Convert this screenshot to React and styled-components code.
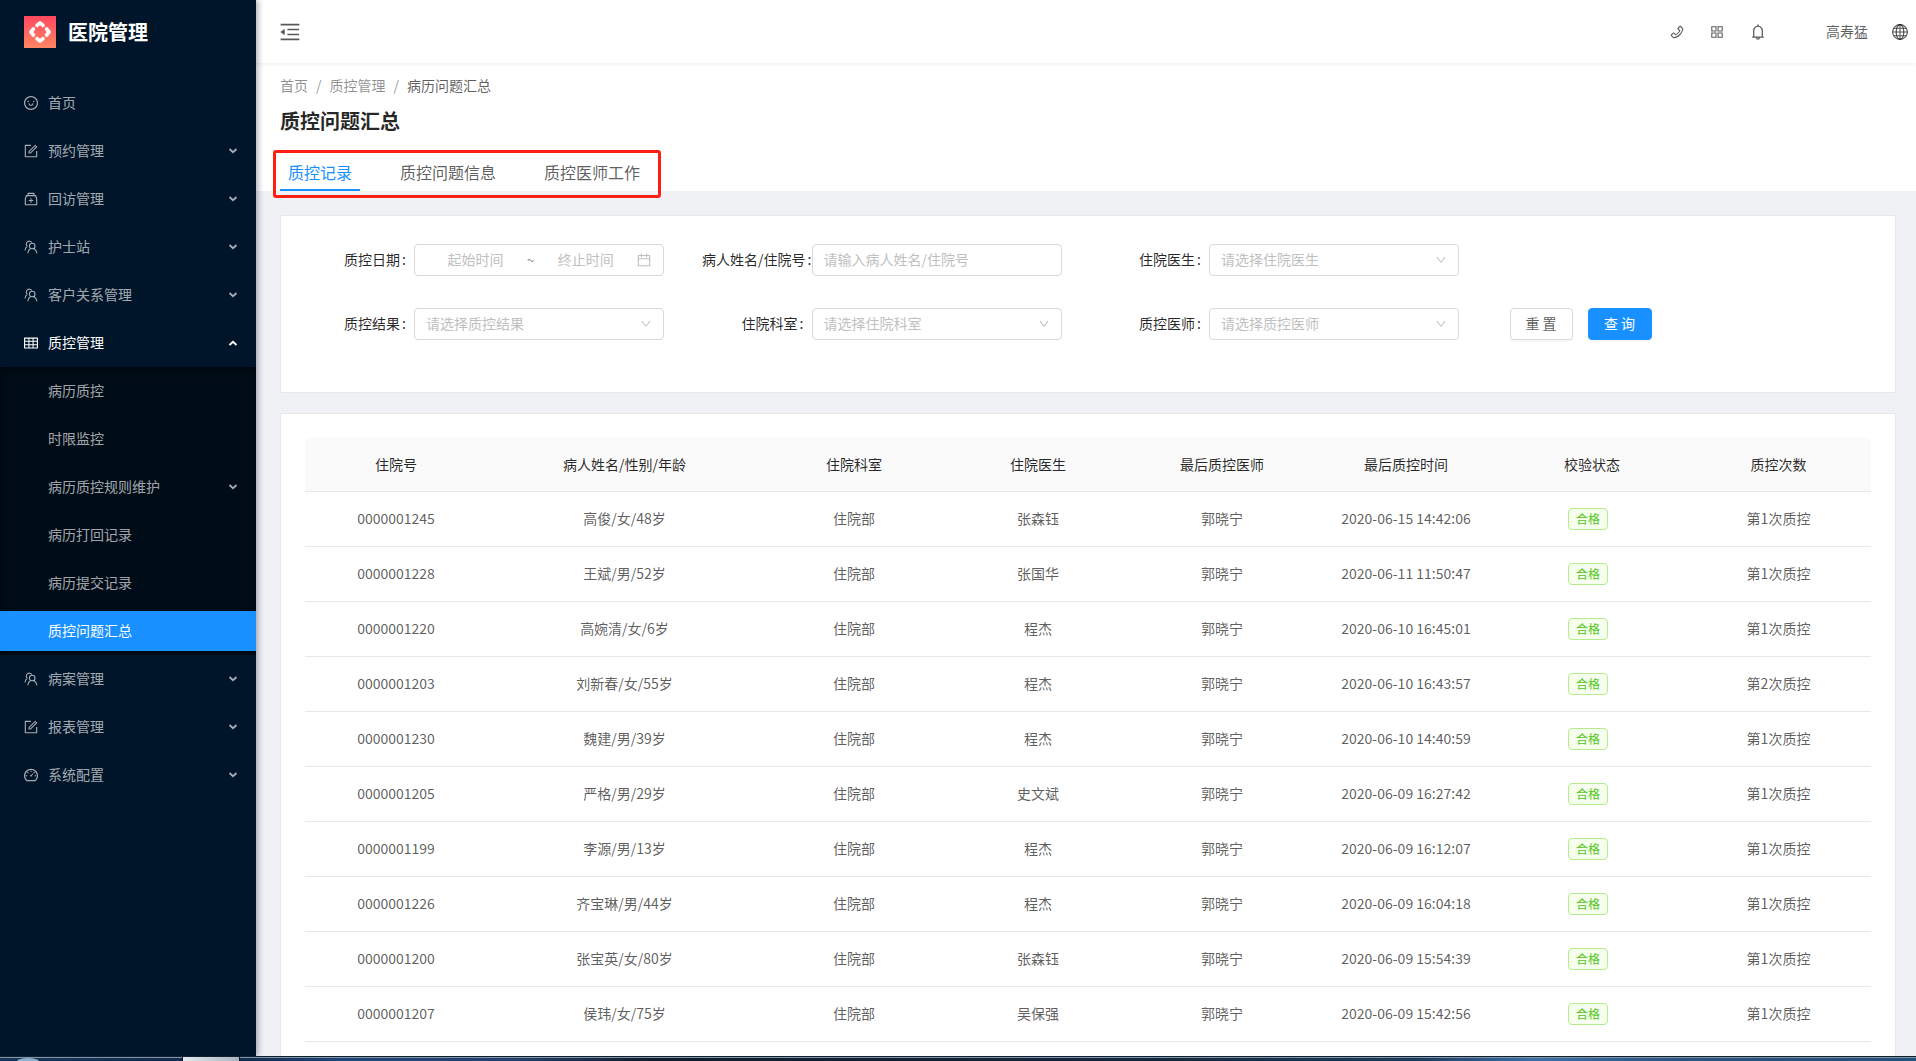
import styled, { createGlobalStyle, css } from 'styled-components';
import {
  AiOutlineSmile,
  AiOutlineForm,
  AiOutlineMedicineBox,
  AiOutlineTable,
  AiOutlineDashboard,
  AiOutlineMenuFold,
  AiOutlinePhone,
  AiOutlineAppstore,
  AiOutlineBell,
  AiOutlineCalendar,
  AiOutlineDown,
} from 'react-icons/ai';

const GlobalStyle = createGlobalStyle`
  * {
    box-sizing: border-box;
  }

  body {
    margin: 0;
    background: #f0f1f5;
    color: rgba(0, 0, 0, 0.65);
    font-family: 'Noto Sans CJK SC', 'Noto Sans', sans-serif;
    font-size: 14px;
    line-height: 22px;
  }

  button,
  input,
  select {
    font: inherit;
    color: inherit;
  }

  svg {
    display: block;
    flex: none;
  }
`;

const Screen = styled.div`
  display: flex;
  flex-direction: column;
  height: 100vh;
  overflow: hidden;
`;

const Layout = styled.div`
  display: flex;
  flex: 1;
  min-height: 0;
`;

/* ---------- sidebar ---------- */

const Sidebar = styled.aside`
  position: relative;
  z-index: 10;
  flex: none;
  width: 256px;
  background: #001529;
  box-shadow: 2px 0 6px rgba(0, 21, 41, 0.35);
`;

const Brand = styled.a`
  display: flex;
  align-items: center;
  gap: 12px;
  height: 63px;
  padding-left: 24px;
  color: #fff;
  font-size: 20px;
  font-weight: 700;
  text-decoration: none;
`;

const Menu = styled.ul`
  margin: 0;
  padding: ${(props) => (props.$sub ? 0 : '16px 0 0')};
  list-style: none;

  ${(props) =>
    props.$sub &&
    css`
      background: #000c17;
      box-shadow: inset 0 2px 8px rgba(0, 0, 0, 0.45);
    `}
`;

const MenuItem = styled.li`
  display: flow-root;
`;

const MenuLink = styled.a`
  display: flex;
  align-items: center;
  gap: 9px;
  height: 40px;
  margin: 4px 0;
  padding: 0 18px 0 ${(props) => (props.$sub ? 48 : 23)}px;
  color: ${(props) => (props.$open || props.$selected ? '#fff' : 'rgba(255, 255, 255, 0.65)')};
  background: ${(props) => (props.$selected ? '#1890ff' : 'transparent')};
  text-decoration: none;
`;

const NavText = styled.span`
  padding-bottom: 2px;
`;

const Caret = styled.svg`
  margin-left: auto;
  transform: ${(props) => (props.$up ? 'rotate(180deg)' : 'none')};
`;

/* ---------- top bar ---------- */

const Main = styled.main`
  flex: 1;
  min-width: 0;
  overflow: hidden;
`;

const TopBar = styled.header`
  position: relative;
  display: flex;
  align-items: center;
  height: 63px;
  padding: 0 8px 0 22px;
  background: #fff;
  box-shadow: 0 1px 4px rgba(0, 21, 41, 0.08);
`;

const IconButton = styled.button`
  display: flex;
  align-items: center;
  justify-content: center;
  padding: 0;
  border: 0;
  background: none;
`;

const Tools = styled.div`
  display: flex;
  align-items: center;
  gap: 24px;
  margin-left: auto;
`;

const ToolIcons = styled.div`
  display: flex;
  align-items: center;
  gap: 24px;
  margin-right: 35px;
`;

/* ---------- page header ---------- */

const PageHeader = styled.section`
  padding: 11px 24px 0;
  background: #fff;
`;

const Breadcrumb = styled.nav`
  display: flex;
  gap: 8px;
  color: rgba(0, 0, 0, 0.45);

  a {
    color: inherit;
    text-decoration: none;
  }

  a:last-child {
    color: rgba(0, 0, 0, 0.65);
  }
`;

const PageTitle = styled.h1`
  margin: 11px 0 14px;
  color: rgba(0, 0, 0, 0.85);
  font-size: 20px;
  font-weight: 700;
  line-height: 28px;
`;

const Tabs = styled.div`
  position: relative;
  display: inline-flex;
  gap: 32px;
  vertical-align: top;
`;

const Tab = styled.button`
  padding: 11px 8px 5px;
  border: 0;
  border-bottom: 2px solid ${(props) => (props.$active ? '#1890ff' : 'transparent')};
  background: none;
  color: ${(props) => (props.$active ? '#1890ff' : 'inherit')};
  font-size: 16px;
  line-height: 24px;
`;

const TabsMark = styled.div`
  position: absolute;
  inset: 1px -13px -7px -7px;
  border: 3px solid #ff1e12;
  border-radius: 3px;
  pointer-events: none;
`;

/* ---------- content ---------- */

const Content = styled.div`
  display: grid;
  gap: 20px;
  padding: 24px 20px 0 24px;
`;

const Card = styled.section`
  border: 1px solid #e8e8e8;
  border-radius: 2px;
  background: #fff;
`;

const FilterCard = styled(Card)`
  padding: 28px 24px 52px 0;
`;

const FilterForm = styled.form`
  display: grid;
  grid-template-columns: repeat(4, 1fr);
  row-gap: 32px;
`;

const Field = styled.div`
  display: flex;
  align-items: center;
`;

const FieldLabel = styled.label`
  flex: none;
  width: 133px;
  padding: 0 ${(props) => (props.$tight ? 0 : 8)}px 2px 0;
  color: rgba(0, 0, 0, 0.85);
  text-align: right;
  white-space: nowrap;

  &::after {
    content: ':';
    margin-left: 2px;
  }
`;

const ControlBox = styled.div`
  display: flex;
  align-items: center;
  position: relative;
  width: 250px;
  height: 32px;
  border: 1px solid #d9d9d9;
  border-radius: 4px;
  background: #fff;
  color: #bfbfbf;
`;

const controlText = css`
  width: 100%;
  height: 100%;
  padding: 0 11px 2px;
  border: 0;
  outline: 0;
  background: transparent;
  color: #bfbfbf;

  &::placeholder {
    color: #bfbfbf;
    opacity: 1;
  }
`;

const TextInput = styled.input`
  ${controlText}
`;

const Select = styled.select`
  ${controlText}
  appearance: none;
`;

const SelectArrow = styled(AiOutlineDown)`
  position: absolute;
  right: 11px;
  pointer-events: none;
`;

const DateBox = styled(ControlBox)`
  justify-content: space-between;
  padding: 0 11px;
`;

const DateInput = styled.input`
  ${controlText}
  width: 99px;
  padding: 0 0 2px;
  text-align: center;
`;

const Tilde = styled.span`
  width: 10px;
  color: rgba(0, 0, 0, 0.45);
  text-align: center;
`;

const Actions = styled.div`
  display: flex;
  grid-column: 4;
  gap: 15px;
  padding-left: 36px;
`;

const Button = styled.button`
  width: ${(props) => (props.$primary ? 64 : 63)}px;
  height: 32px;
  padding: 0 0 2px;
  border: 1px solid ${(props) => (props.$primary ? '#1890ff' : '#d9d9d9')};
  border-radius: 4px;
  background: ${(props) => (props.$primary ? '#1890ff' : '#fff')};
  color: ${(props) => (props.$primary ? '#fff' : 'rgba(0, 0, 0, 0.65)')};
  box-shadow: 0 2px 0 rgba(0, 0, 0, 0.03);
`;

const TableCard = styled(Card)`
  padding: 24px;
`;

const Table = styled.table`
  width: 100%;
  border-collapse: separate;
  border-spacing: 0;
  table-layout: fixed;
  text-align: center;

  th {
    height: 54px;
    padding: 0 16px 2px;
    border-bottom: 1px solid #e8e8e8;
    background: #fafafa;
    color: rgba(0, 0, 0, 0.85);
    font-weight: 400;
  }

  td {
    height: 55px;
    padding: 0 16px 2px;
    border-bottom: 1px solid #e8e8e8;
  }

  th:first-child {
    border-top-left-radius: 4px;
  }

  th:last-child {
    border-top-right-radius: 4px;
  }
`;

const Col = styled.col`
  width: ${(props) => props.$width}px;
`;

const Tag = styled.span`
  display: inline-block;
  margin-right: 8px;
  padding: 0 7px;
  border: 1px solid #b7eb8f;
  border-radius: 4px;
  background: #f6ffed;
  color: #52c41a;
  font-size: 12px;
  line-height: 20px;
  vertical-align: middle;
`;

/* ---------- desktop task bar ---------- */

const TaskBar = styled.footer`
  position: relative;
  z-index: 20;
  display: flex;
  flex: none;
  height: 5px;
  border-top: 1px solid #10202f;
  background: linear-gradient(90deg, #17365d 0%, #12284a 12%, #1d4778 18%, #24406b 27%, #101c2c 34%, #14283c 60%, #1a3c5c 74%, #3d6fa5 80%, #2b537f 88%, #24507c 100%);
  box-shadow: inset 0 1px 0 #7f93a8;
`;

const StartOrb = styled.div`
  align-self: flex-end;
  width: 22px;
  height: 3px;
  margin-left: 17px;
  border-radius: 11px 11px 0 0 / 3px 3px 0 0;
  background: #8fb3cc;
`;

const TaskWindow = styled.div`
  width: 58px;
  height: 4px;
  margin-left: 143px;
  border: solid #0a1420;
  border-width: 0 1px;
  background: linear-gradient(90deg, #e4e8ec, #a9b5c0);
`;

function LogoIcon() {
  return (
    <svg width="32" height="32" viewBox="0 0 32 32">
      <defs>
        <linearGradient id="logo" x1="0" y1="0" x2="0" y2="1">
          <stop offset="0" stopColor="#ff4860" />
          <stop offset="1" stopColor="#ff8562" />
        </linearGradient>
      </defs>
      <rect width="32" height="32" fill="url(#logo)" />
      <g fill="none" stroke="#fff" strokeWidth="3.6" strokeLinecap="round" strokeLinejoin="round">
        {[0, 90, 180, 270].map((angle) => (
          <path key={angle} transform={`rotate(${angle} 16 16)`} d="M13 9.400L16 6.900l3 2.500" />
        ))}
      </g>
    </svg>
  );
}

function PeopleIcon() {
  return (
    <svg width="16" height="16" viewBox="-1 -1 16 16" fill="none" stroke="currentColor" strokeWidth="1.1">
      <path d="M3.300 6.400A3 3 0 1 1 7.800 2.500M3.300 6.400C2 7.300 1.200 8.700 1 10.400" />
      <circle cx="8.2" cy="6" r="2.8" />
      <path d="M6.600 8.400C5 9.300 4 11 3.800 13.200M9.800 8.400c1.700.9 2.900 2.600 3.200 4.800" />
    </svg>
  );
}

function GlobeIcon() {
  return (
    <svg width="16" height="16" viewBox="0 0 16 16" fill="none" stroke="currentColor" strokeWidth="1.1">
      <circle cx="8" cy="8" r="7.4" />
      <ellipse cx="8" cy="8" rx="3.8" ry="7.4" />
      <path d="M8 .6v14.800M.6 8h14.800M1.700 4.300h12.600M1.700 11.700h12.600" />
    </svg>
  );
}

function MenuCaret({ up }) {
  return (
    <Caret $up={up} width="10" height="8" viewBox="0 0 10 8" fill="none" stroke="currentColor" strokeWidth="1.8">
      <path d="M1.500 2L5 5.200 8.500 2" />
    </Caret>
  );
}

const menu = [
  { title: '首页', icon: AiOutlineSmile },
  { title: '预约管理', icon: AiOutlineForm, group: true },
  { title: '回访管理', icon: AiOutlineMedicineBox, group: true },
  { title: '护士站', icon: PeopleIcon, group: true },
  { title: '客户关系管理', icon: PeopleIcon, group: true },
  {
    title: '质控管理',
    icon: AiOutlineTable,
    group: true,
    children: [
      { title: '病历质控' },
      { title: '时限监控' },
      { title: '病历质控规则维护', group: true },
      { title: '病历打回记录' },
      { title: '病历提交记录' },
      { title: '质控问题汇总', selected: true },
    ],
  },
  { title: '病案管理', icon: PeopleIcon, group: true },
  { title: '报表管理', icon: AiOutlineForm, group: true },
  { title: '系统配置', icon: AiOutlineDashboard, group: true },
];

const columns = [
  { title: '住院号', width: 182 },
  { title: '病人姓名/性别/年龄', width: 275 },
  { title: '住院科室', width: 184 },
  { title: '住院医生', width: 184 },
  { title: '最后质控医师', width: 184 },
  { title: '最后质控时间', width: 184 },
  { title: '校验状态', width: 188 },
  { title: '质控次数', width: 185 },
];

const records = [
  ['0000001245', '高俊/女/48岁', '住院部', '张森钰', '郭晓宁', '2020-06-15 14:42:06', '合格', '第1次质控'],
  ['0000001228', '王斌/男/52岁', '住院部', '张国华', '郭晓宁', '2020-06-11 11:50:47', '合格', '第1次质控'],
  ['0000001220', '高婉清/女/6岁', '住院部', '程杰', '郭晓宁', '2020-06-10 16:45:01', '合格', '第1次质控'],
  ['0000001203', '刘新春/女/55岁', '住院部', '程杰', '郭晓宁', '2020-06-10 16:43:57', '合格', '第2次质控'],
  ['0000001230', '魏建/男/39岁', '住院部', '程杰', '郭晓宁', '2020-06-10 14:40:59', '合格', '第1次质控'],
  ['0000001205', '严格/男/29岁', '住院部', '史文斌', '郭晓宁', '2020-06-09 16:27:42', '合格', '第1次质控'],
  ['0000001199', '李源/男/13岁', '住院部', '程杰', '郭晓宁', '2020-06-09 16:12:07', '合格', '第1次质控'],
  ['0000001226', '齐宝琳/男/44岁', '住院部', '程杰', '郭晓宁', '2020-06-09 16:04:18', '合格', '第1次质控'],
  ['0000001200', '张宝英/女/80岁', '住院部', '张森钰', '郭晓宁', '2020-06-09 15:54:39', '合格', '第1次质控'],
  ['0000001207', '侯玮/女/75岁', '住院部', '吴保强', '郭晓宁', '2020-06-09 15:42:56', '合格', '第1次质控'],
];

function NavMenu({ items, sub }) {
  return (
    <Menu $sub={sub}>
      {items.map(({ title, icon: Icon, group, children, selected }) => (
        <MenuItem key={title}>
          <MenuLink href="#" $sub={sub} $open={!!children} $selected={selected}>
            {Icon && <Icon size={16} />}
            <NavText>{title}</NavText>
            {group && <MenuCaret up={!!children} />}
          </MenuLink>
          {children && <NavMenu items={children} sub />}
        </MenuItem>
      ))}
    </Menu>
  );
}

function SelectField({ id, label }) {
  return (
    <Field>
      <FieldLabel htmlFor={id}>{label}</FieldLabel>
      <ControlBox>
        <Select id={id}>
          <option>请选择{label}</option>
        </Select>
        <SelectArrow size={12} />
      </ControlBox>
    </Field>
  );
}

function Filters() {
  return (
    <FilterCard>
      <FilterForm onSubmit={(e) => e.preventDefault()}>
        <Field>
          <FieldLabel htmlFor="start">质控日期</FieldLabel>
          <DateBox>
            <DateInput id="start" placeholder="起始时间" />
            <Tilde>~</Tilde>
            <DateInput aria-label="终止时间" placeholder="终止时间" />
            <AiOutlineCalendar size={16} />
          </DateBox>
        </Field>
        <Field>
          <FieldLabel htmlFor="patient" $tight>病人姓名/住院号</FieldLabel>
          <ControlBox>
            <TextInput id="patient" placeholder="请输入病人姓名/住院号" />
          </ControlBox>
        </Field>
        <SelectField id="doctor" label="住院医生" />
        <span />
        <SelectField id="result" label="质控结果" />
        <SelectField id="department" label="住院科室" />
        <SelectField id="inspector" label="质控医师" />
        <Actions>
          <Button type="reset">重 置</Button>
          <Button type="submit" $primary>查 询</Button>
        </Actions>
      </FilterForm>
    </FilterCard>
  );
}

function RecordTable() {
  return (
    <TableCard>
      <Table>
        <colgroup>
          {columns.map((column) => (
            <Col key={column.title} $width={column.width} />
          ))}
        </colgroup>
        <thead>
          <tr>
            {columns.map((column) => (
              <th key={column.title}>{column.title}</th>
            ))}
          </tr>
        </thead>
        <tbody>
          {records.map((record) => (
            <tr key={record[0]}>
              {record.map((value, index) => (
                <td key={columns[index].title}>{index === 6 ? <Tag>{value}</Tag> : value}</td>
              ))}
            </tr>
          ))}
        </tbody>
      </Table>
    </TableCard>
  );
}

const App = () => {
  return (
    <>
      <GlobalStyle />
      <Screen>
        <Layout>
          <Sidebar>
            <Brand href="#">
              <LogoIcon />
              医院管理
            </Brand>
            <NavMenu items={menu} />
          </Sidebar>

          <Main>
            <TopBar>
              <IconButton aria-label="收起菜单">
                <AiOutlineMenuFold size={24} />
              </IconButton>
              <Tools>
                <ToolIcons>
                  <IconButton aria-label="电话">
                    <AiOutlinePhone size={16} />
                  </IconButton>
                  <IconButton aria-label="应用">
                    <AiOutlineAppstore size={16} />
                  </IconButton>
                  <IconButton aria-label="通知">
                    <AiOutlineBell size={18} />
                  </IconButton>
                </ToolIcons>
                <NavText>高寿猛</NavText>
                <IconButton aria-label="语言">
                  <GlobeIcon />
                </IconButton>
              </Tools>
            </TopBar>

            <PageHeader>
              <Breadcrumb>
                <a href="#">首页</a>
                <span>/</span>
                <a href="#">质控管理</a>
                <span>/</span>
                <a href="#">病历问题汇总</a>
              </Breadcrumb>
              <PageTitle>质控问题汇总</PageTitle>
              <Tabs>
                <Tab $active>质控记录</Tab>
                <Tab>质控问题信息</Tab>
                <Tab>质控医师工作</Tab>
                <TabsMark />
              </Tabs>
            </PageHeader>

            <Content>
              <Filters />
              <RecordTable />
            </Content>
          </Main>
        </Layout>

        <TaskBar>
          <StartOrb />
          <TaskWindow />
        </TaskBar>
      </Screen>
    </>
  );
};

export default App;
